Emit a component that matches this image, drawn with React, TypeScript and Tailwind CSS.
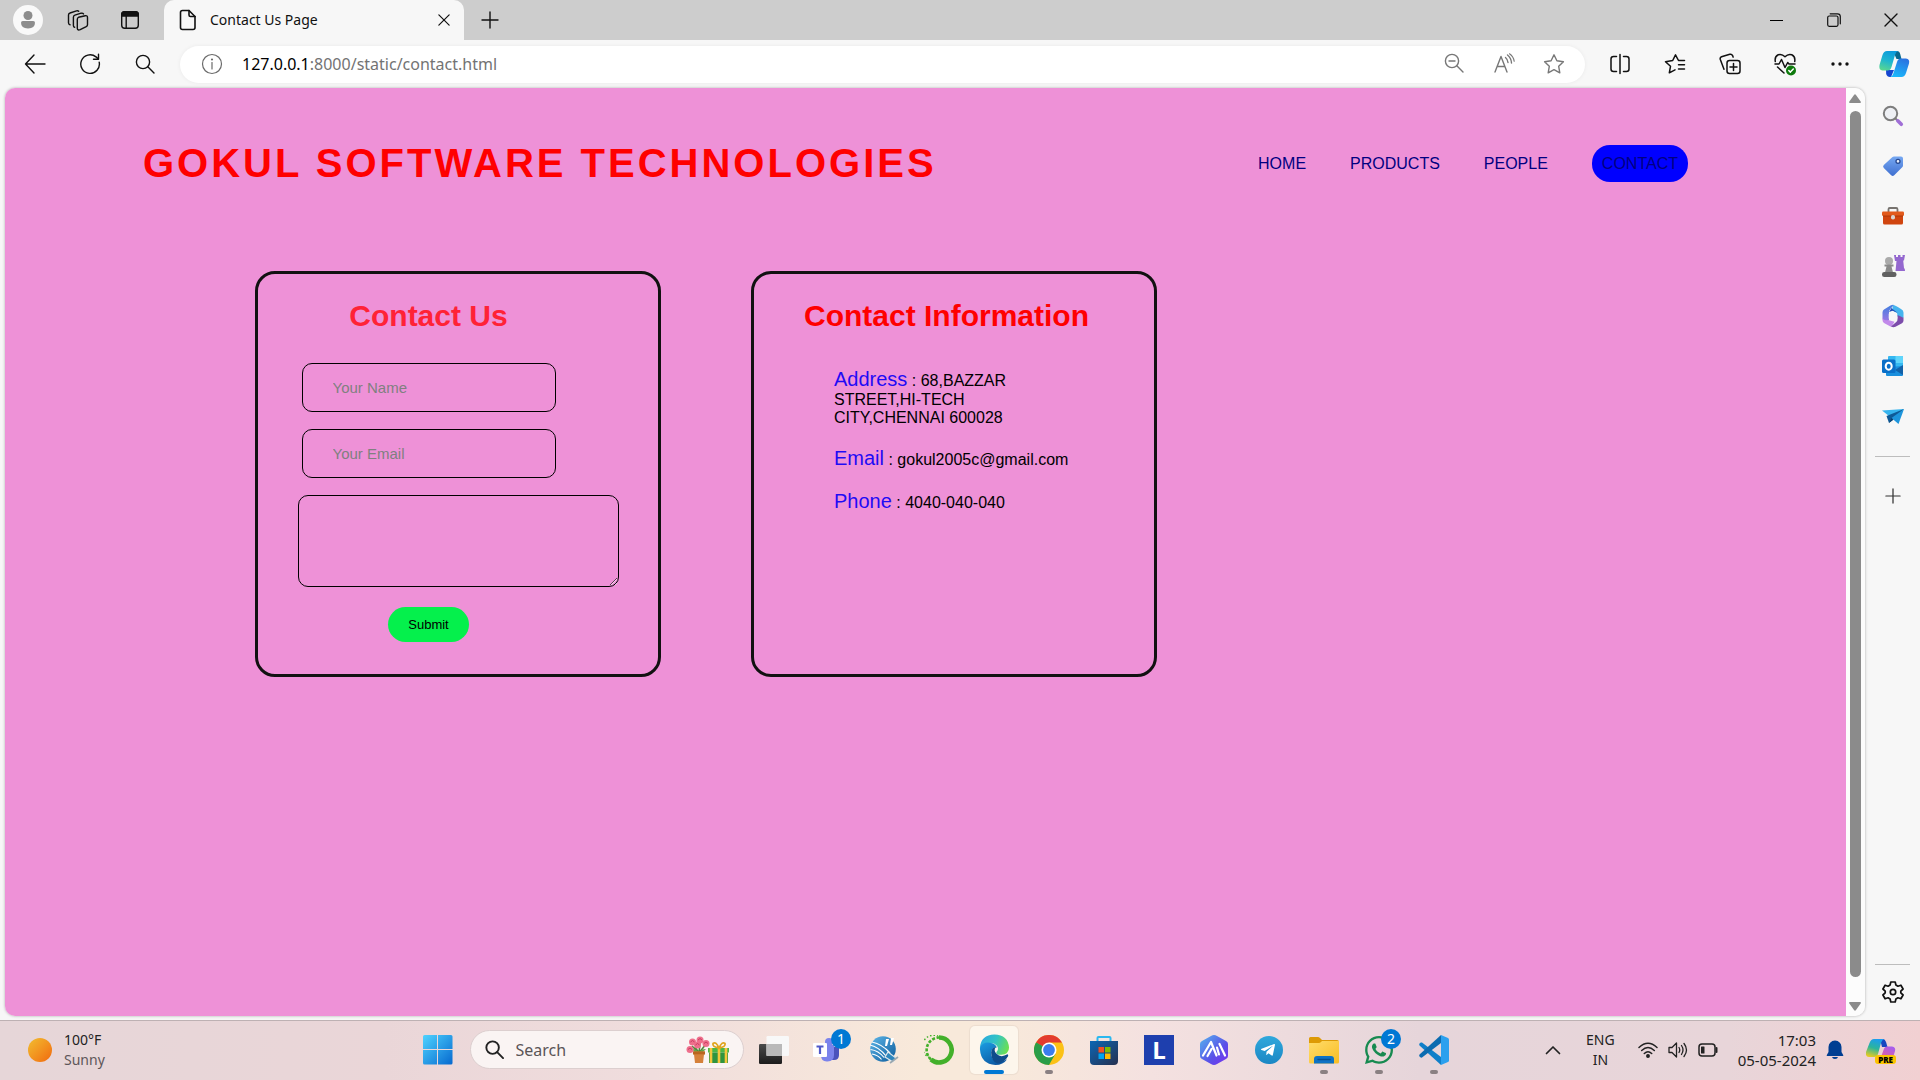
import React from "react";
import { FaWhatsapp, FaTelegramPlane } from "react-icons/fa";

type IconProps = { className?: string };

const line = {
  fill: "none",
  stroke: "currentColor",
  strokeWidth: 1.4,
  strokeLinecap: "round" as const,
  strokeLinejoin: "round" as const,
};

/* ---------- Browser chrome icons ---------- */

const ProfileIcon = () => (
  <svg className="size-[30px]" viewBox="0 0 30 30">
    <circle cx="15" cy="15" r="15" fill="#f9f9f9" />
    <circle cx="15" cy="10.500" r="4.500" fill="#8d8d8d" />
    <path d="M8 17.800q0-1.800 1.800-1.800h10.400q1.800 0 1.800 1.800 0 5.700-7 5.700t-7-5.700z" fill="#8d8d8d" />
  </svg>
);

const WorkspacesIcon = () => (
  <svg className="size-[22px]" viewBox="0 0 22 22" {...line}>
    <path d="M11.500 8.300l6.800-1.600q2.200-.4 2.200 1.800v7.200q0 1.300-1.300 2l-6 2.900q-2.700 1.100-2.900-1.200v-9q0-1.700 1.200-2.100z" />
    <path d="M7.600 18.300q-1.200-.2-1.200-1.800V8.200q0-1.500 1.500-2l6.200-2q1.700-.4 2.400.7" />
    <path d="M3 15.800q-1.500-.3-1.500-2V6q0-1.600 1.500-2l6.500-2.200q1.400-.4 2.200.5" />
  </svg>
);

const TabActionsIcon = () => (
  <svg className="size-5" viewBox="0 0 20 20" {...line}>
    <rect x="1.700" y="1.700" width="16.600" height="16.600" rx="3" />
    <path d="M1.700 4.500q0-2.800 2.800-2.800h11q2.800 0 2.800 2.800V6H1.700z" fill="currentColor" />
    <path d="M6.200 6v12" />
  </svg>
);

const PageIcon = () => (
  <svg className="h-[22px] w-[18px]" viewBox="0 0 18 22" {...line} strokeWidth={1.600}>
    <path d="M3.500 1.500H10l6 6v11q0 2-2 2H3.500q-2 0-2-2v-15q0-2 2-2z" />
    <path d="M10 1.500V6q0 1.500 1.500 1.500H16" />
  </svg>
);

const CrossIcon = ({ className }: IconProps) => (
  <svg className={className} viewBox="0 0 14 14" {...line}>
    <path d="M1 1l12 12M13 1L1 13" />
  </svg>
);

const PlusIcon = ({ className }: IconProps) => (
  <svg className={className} viewBox="0 0 18 18" {...line}>
    <path d="M9 1v16M1 9h16" />
  </svg>
);

const RestoreIcon = () => (
  <svg className="size-[14px]" viewBox="0 0 14 14" {...line} strokeWidth={1.200}>
    <rect x=".7" y="3" width="10.300" height="10.300" rx="1.500" />
    <path d="M3.200 .8h7.300q2.800 0 2.800 2.800V10.800" />
  </svg>
);

const BackIcon = () => (
  <svg className="size-[22px]" viewBox="0 0 22 22" {...line}>
    <path d="M10 2L1.500 11 10 20M1.500 11H21" />
  </svg>
);

const ReloadIcon = () => (
  <svg className="size-[22px]" viewBox="0 0 22 22" {...line}>
    <path d="M20.200 9.200A9.300 9.300 0 1 1 17 3.900l2.300 2" />
    <path d="M19.500 1.200v5h-5" />
  </svg>
);

const SearchIcon = ({ className }: IconProps) => (
  <svg className={className} viewBox="0 0 20 20" {...line}>
    <circle cx="8" cy="8" r="6.600" />
    <path d="M12.800 12.800L19 19" />
  </svg>
);

const InfoIcon = () => (
  <svg className="size-[22px] text-[#6a6a6a]" viewBox="0 0 22 22" {...line} strokeWidth={1.200}>
    <circle cx="11" cy="11" r="9.500" />
    <path d="M11 9.500V16" />
    <circle cx="11" cy="6.500" r=".5" fill="currentColor" />
  </svg>
);

const ZoomOutIcon = () => (
  <svg className="size-5" viewBox="0 0 20 20" {...line}>
    <circle cx="8" cy="8" r="6.600" />
    <path d="M12.800 12.800L19 19M5 8h6" />
  </svg>
);

const ReadAloudIcon = () => (
  <svg className="size-[22px]" viewBox="0 0 22 22" {...line}>
    <path d="M2 19L8 3.500 14 19M4.200 13.500h7.600" />
    <path d="M12.500 4.500q2.200 1.800 2.500 5M14.500 2q3.700 2.800 4 8" />
    <path d="M16.500 .8q4 2.700 4.700 7.500" strokeWidth={1.100} />
  </svg>
);

const STAR = "M11 1.800l2.900 6 6.500.9-4.700 4.600 1.100 6.500L11 16.700l-5.800 3.100 1.100-6.500L1.600 8.700l6.500-.9z";

const StarIcon = () => (
  <svg className="size-[22px]" viewBox="0 0 22 22" {...line}>
    <path d={STAR} />
  </svg>
);

const SplitIcon = () => (
  <svg className="size-[22px]" viewBox="0 0 22 22" {...line} strokeWidth={1.500}>
    <path d="M7.500 3.500h-3q-2.500 0-2.500 2.500v10q0 2.500 2.500 2.500h3M14.500 3.500h3q2.500 0 2.500 2.500v10q0 2.500-2.500 2.500h-3M11 1.500v19" />
  </svg>
);

const FavoritesIcon = () => (
  <svg className="size-[22px]" viewBox="0 0 22 22" {...line} strokeWidth={1.500}>
    <path d="M20.500 7.500h-6L11.500 1.800 8.700 7.500 1.500 8.700l5 4.600-1.200 6.500 5.700-3" />
    <path d="M14.500 11.700h6M14.500 16h6" />
  </svg>
);

const CollectionsIcon = () => (
  <svg className="size-[22px]" viewBox="0 0 22 22" {...line} strokeWidth={1.500}>
    <rect x="8" y="7.500" width="13" height="13" rx="2.500" />
    <path d="M14.500 10.500v7M11 14h7" />
    <path d="M5 16.200L1.300 6.500q-.6-2 1.200-2.700L10.800 1.300q1.900-.5 2.800 1.300l.5 1.500" />
  </svg>
);

const HeartPulseIcon = () => (
  <svg className="size-6" viewBox="0 0 24 24" {...line} strokeWidth={1.500}>
    <path d="M2.300 9.500q-.9-5 2.900-6.700 3.700-1.200 6.800 2 3.100-3.200 6.800-2 3.800 1.700 2.900 6.700" />
    <path d="M2 12h4l2.500-4.500 3.500 8 2.700-5L16 12h6M4.500 15l6.500 6" />
    <circle cx="18" cy="18.500" r="5" fill="#0e7a0d" stroke="none" />
    <path d="M15.800 18.500l1.600 1.600 2.900-3" stroke="#fff" />
  </svg>
);

const MoreIcon = () => (
  <svg className="h-1 w-[18px]" viewBox="0 0 18 4" fill="currentColor">
    <circle cx="2" cy="2" r="1.700" />
    <circle cx="9" cy="2" r="1.700" />
    <circle cx="16" cy="2" r="1.700" />
  </svg>
);

const CopilotIcon = () => (
  <svg className="h-7 w-8" viewBox="0 0 32 28">
    <defs>
      <linearGradient id="cpA" x1=".6" y1="0" x2=".3" y2="1">
        <stop offset="0" stopColor="#0c9bdc" />
        <stop offset=".5" stopColor="#1fb6cf" />
        <stop offset="1" stopColor="#58d691" />
      </linearGradient>
      <linearGradient id="cpB" x1=".7" y1="0" x2=".3" y2="1">
        <stop offset="0" stopColor="#2a72e0" />
        <stop offset="1" stopColor="#1ab8fb" />
      </linearGradient>
    </defs>
    <path d="M15 1h4q2.500 0 3.200 3l1.300 5h-5z" fill="#08698e" />
    <path d="M8 20h8l-3 7h-1q-3 0-3.800-3z" fill="#1546d0" />
    <path d="M9 1h11q-2 .5-3 4l-3.500 12q-1 3.500-4 3.500H4.500q-4-.5-3-5.500L4.500 5Q5.800 1 9 1z" fill="url(#cpA)" />
    <path d="M22.500 8.500H28q4 .5 3 5l-3 9.500q-1.300 4-4.500 4H12q2.500-.5 3.500-4L19 12q1-3.500 3.500-3.500z" fill="url(#cpB)" />
  </svg>
);

/* ---------- Sidebar icons ---------- */

const SideSearch = () => (
  <svg className="size-[22px]" viewBox="0 0 22 22" fill="none" strokeLinecap="round">
    <circle cx="8.500" cy="8.500" r="6.700" stroke="#7d7d7d" strokeWidth="2" fill="#eef0f4" />
    <path d="M13.500 13.500l2 2" stroke="#7d7d7d" strokeWidth="2" />
    <path d="M15.800 15.800l3.500 3.500" stroke="#a06fd6" strokeWidth="3.600" />
  </svg>
);

const SideTag = () => (
  <svg className="size-[22px]" viewBox="0 0 22 22">
    <defs>
      <linearGradient id="tag" x1="0" y1="0" x2="0" y2="1">
        <stop offset="0" stopColor="#76a8f2" />
        <stop offset="1" stopColor="#3f6fd0" />
      </linearGradient>
    </defs>
    <path d="M12 1.500h7q2 0 2 2v7q0 1-.8 1.800l-8 8q-1.500 1.400-3 0L1.800 13q-1.400-1.500 0-3l8.400-7.800q.8-.7 1.800-.7z" fill="url(#tag)" />
    <circle cx="16" cy="6.300" r="2" fill="#e8f0ff" stroke="#27488f" strokeWidth="1.300" />
  </svg>
);

const SideTools = () => (
  <svg className="size-[22px]" viewBox="0 0 22 22">
    <path d="M6.500 7V4.300q0-1.300 1.300-1.300h6.400q1.300 0 1.300 1.300V7" fill="none" stroke="#77736f" strokeWidth="1.800" />
    <rect x="1" y="9" width="20" height="10.500" rx="1.500" fill="#d0450f" />
    <rect x="0" y="6.500" width="22" height="4.500" rx="1.200" fill="#e25a1c" />
    <path d="M1 11h20" stroke="#a23208" strokeWidth=".8" />
    <rect x="9" y="10" width="4" height="4.500" rx="1.800" fill="#d9d4d0" />
  </svg>
);

const SideGames = () => (
  <svg className="size-6" viewBox="0 0 24 24">
    <path d="M13 1h2v2h2V1h2.500v2h2V1H24l-1 5.500h-.8l.8 7.500q1 .5 1 3h-9.500l1-10H14z" fill="#9468cf" />
    <circle cx="8" cy="7" r="4" fill="#aaa" />
    <path d="M3.500 10.500h9v2H10.500l1.500 6H4l1.500-6h-2z" fill="#8a8a8a" />
    <rect x="1" y="18" width="14.500" height="5" rx="2.300" fill="#616161" />
  </svg>
);

const SideM365 = () => (
  <svg className="size-6" viewBox="0 0 24 24">
    <defs>
      <linearGradient id="m365" x1="0" y1="0" x2="0" y2="1">
        <stop offset="0" stopColor="#3f7fe0" />
        <stop offset="1" stopColor="#a475e4" />
      </linearGradient>
    </defs>
    <path d="M12 1q2 0 8 4 2.500 1.300 2.500 3.500V14l-6.500-1.500V9l-5-2.500z" fill="#45b4ee" />
    <path d="M12.500 .8L8 7v9l-2 3-3-2q-1.500-1-1.500-3V8.500q0-2 1.500-3L9.500 1.600q1.500-.9 3-.8z" fill="url(#m365)" />
    <path d="M12.500 .8q-1.800 1.200-1.600 3.700l5.600 4.300-5-2L8 8z" fill="#2450b8" />
    <path d="M1.500 13.500q.5 2.500 3 2.700H8l5.500 1.500-3 5q-1-.2-2-.8L3 19q-1.500-1-1.500-3z" fill="#c28aea" />
    <path d="M16.500 11l6 2.700v2.800q0 1.800-1.500 2.700l-6.500 3.600q-2.300 1-4.500-.2l5.500-4.800q1-.8 1-2.500z" fill="#7c4cab" />
    <path d="M12 7.200l4.300 2.500v4.700L12 16.900l-4.300-2.500V9.700z" fill="#f7f7f7" />
  </svg>
);

const SideOutlook = () => (
  <svg className="size-[22px]" viewBox="0 0 22 22">
    <rect x="6" y="1" width="15" height="17" rx="1" fill="#35b8f1" />
    <path d="M13.500 1H20q1 0 1 1v6h-7.500z" fill="#5fd5fb" />
    <path d="M4 12l17-1v9q0 1-1 1H5q-1 0-1-1z" fill="#1a8fdd" />
    <path d="M13 15l8-5v10z" fill="#1261a8" />
    <rect x="0" y="4.500" width="13.500" height="13.500" rx="1.500" fill="#0a6fc8" />
    <ellipse cx="6.700" cy="11.200" rx="3" ry="3.500" fill="none" stroke="#fff" strokeWidth="2" />
  </svg>
);

const SideDrop = () => (
  <svg className="size-[22px]" viewBox="0 0 22 22">
    <path d="M0 5.500L22 4l-8.500 7.500-6.500-.5z" fill="#36b4ee" />
    <path d="M22 4L4.500 11 7 18z" fill="#0e5a97" />
    <path d="M22 4l-5.500 15L9.500 13z" fill="#1d95dc" />
    <path d="M7 18l2.500-5 2 1.800z" fill="#083f70" />
  </svg>
);

const GearIcon = () => (
  <svg className="size-6" viewBox="0 0 24 24" {...line} strokeWidth={1.700}>
    <path d="M9.800 2h4.400l.7 3 2 1.200 3-1 2.200 3.800-2.300 2.100v1.800l2.300 2.100-2.200 3.800-3-1-2 1.200-.7 3H9.800l-.7-3-2-1.200-3 1L1.900 15l2.300-2.100v-1.800L1.900 9l2.200-3.800 3 1 2-1.200z" />
    <circle cx="12" cy="12" r="2.700" />
  </svg>
);

/* ---------- Taskbar icons ---------- */

const WindowsIcon = () => (
  <svg className="size-[30px]" viewBox="0 0 30 30">
    <defs>
      <linearGradient id="win" x1="0" y1="0" x2="1" y2="1">
        <stop offset="0" stopColor="#4fd3ff" />
        <stop offset="1" stopColor="#0669cf" />
      </linearGradient>
    </defs>
    <path d="M1.500 0H14v14H0V1.500Q0 0 1.500 0zM15 0h13q1.500 0 1.500 1.500V14H15zM0 15h14v14.500H1.500Q0 29.500 0 28zM15 15h14.500v13q0 1.500-1.500 1.500H15z" fill="url(#win)" />
  </svg>
);

const FlowersIcon = () => (
  <svg className="h-[28px] w-[44px]" viewBox="0 0 44 28">
    <path d="M13 17L6 10M13 17l1-10M13 17l7-9M13 17l-4-6" stroke="#4b8b3b" strokeWidth="1.600" fill="none" />
    <path d="M6 13q5 0 7 4 2-4 7-4l-5 5h-5z" fill="#5fa548" />
    {[[4, 13.500], [6.500, 6], [14, 4], [20, 7.500], [11.500, 9]].map(([x, y]) => (
      <g key={`${x}-${y}`}>
        <circle cx={x} cy={y} r="3.500" fill="#ee6f8c" />
        <path d={`M${x - 2} ${y}q2-3 4 0`} stroke="#c93c60" fill="none" />
      </g>
    ))}
    <path d="M7 15.500h12v3h-1l-1 8.500H9l-1-8.500H7z" fill="#d5813a" />
    <path d="M7 15.500h12v2.800H7z" fill="#b9651f" />
    <rect x="22" y="12" width="21" height="4.500" fill="#4cb648" />
    <rect x="23" y="16.500" width="19" height="10.500" fill="#2f9440" />
    <path d="M25 12v15M33 12v15M40 12v15" stroke="#f5c63b" strokeWidth="2.600" />
    <path d="M33 12q-7-1-6-4.500 3-2.500 6 4.500 3-7 6-4.500 1 3.500-6 4.500z" fill="none" stroke="#e0a51f" strokeWidth="1.800" />
  </svg>
);

const TaskViewIcon = () => (
  <svg className="size-[30px]" viewBox="0 0 30 30">
    <defs>
      <linearGradient id="tv" x1="0" y1="0" x2="0" y2="1">
        <stop offset="0" stopColor="#4a4a4a" />
        <stop offset="1" stopColor="#1c1c1c" />
      </linearGradient>
    </defs>
    <rect x="0" y="9" width="23" height="20" rx="1.200" fill="url(#tv)" />
    <rect x="7.500" y="1" width="22.500" height="20" rx="1.200" fill="#f8f8f8" />
    <rect x="7.500" y="9" width="15.500" height="12" fill="#b9b9b9" />
  </svg>
);

const TeamsIcon = () => (
  <svg className="h-[30px] w-[34px]" viewBox="0 0 34 30">
    <path d="M16 12h11v8q0 5-5 5h-6z" fill="#4b53bc" />
    <path d="M9 10h13v10q0 6-6.500 6.500T9 20z" fill="#7b83eb" />
    <circle cx="17" cy="7" r="4" fill="#7b83eb" />
    <rect x="1" y="8" width="14" height="14" rx="1" fill="#fff" />
    <path d="M4.500 11.500h7M8 11.500V19" stroke="#5059c9" strokeWidth="2.200" />
  </svg>
);

const GlobeIcon = () => (
  <svg className="size-[30px]" viewBox="0 0 30 30">
    <defs>
      <linearGradient id="globe" x1="0" y1="0" x2="1" y2="1">
        <stop offset="0" stopColor="#5eb6e8" />
        <stop offset="1" stopColor="#0c5b9b" />
      </linearGradient>
    </defs>
    <circle cx="14" cy="14" r="12.800" fill="url(#globe)" />
    <path d="M1 10q9 2 16 11M1.500 14.500q8 1 13.500 8M3 19q6 1 9.500 5.500M3 7q10 2 18 11" stroke="#fff" strokeWidth="1.200" fill="none" />
    <path d="M17 4h3l-2 7h-2zM22 3h3l-2 7h-2z" fill="#fff" />
    <path d="M19 17l8 6-3 4-8-5z" fill="#2e86bd" stroke="#dfe7ec" strokeWidth="1.200" />
    <path d="M21 28l8-6" stroke="#9aa7af" strokeWidth="1.600" />
  </svg>
);

const AnacondaIcon = () => (
  <svg className="size-[30px]" viewBox="0 0 30 30" fill="none">
    <path d="M15 2.500a12.500 12.500 0 1 1-8 22" stroke="#43b02a" strokeWidth="4.600" />
    <path d="M7 24.500a12.500 12.500 0 0 1 8-22" stroke="#43b02a" strokeWidth="2.600" strokeDasharray="3 1.600" />
    <path d="M5.500 22.500A11.500 11.500 0 0 1 14 1" stroke="#43b02a" strokeWidth="1.500" strokeDasharray="1.500 2" />
  </svg>
);

const EdgeIcon = () => (
  <svg className="size-[31px]" viewBox="0 0 32 32">
    <defs>
      <linearGradient id="edA" x1="0" y1=".3" x2="1" y2=".6">
        <stop offset="0" stopColor="#2aa9e0" />
        <stop offset=".5" stopColor="#33c4c4" />
        <stop offset="1" stopColor="#6de050" />
      </linearGradient>
      <linearGradient id="edB" x1="0" y1="0" x2=".6" y2="1">
        <stop offset="0" stopColor="#1b9de2" />
        <stop offset="1" stopColor="#0c59a4" />
      </linearGradient>
    </defs>
    <path d="M1 14Q2 1 16 .5q14 .5 15 13.500 0 7-8 7.500-6 0-5-3 3-3 .5-6.500-3-3.500-8.500-2.500T1 14z" fill="url(#edA)" />
    <path d="M1 14q3-6 10-5 6 .5 7.500 5-5-1-6 5 0 8 7.500 9.500 4.500.5 9-2.500-4 6-12 6Q2 31 1 16z" fill="url(#edB)" />
    <path d="M12.500 19q.5-5 5-5.500-3 3 .5 7 4.500 4.500 11.500.5 1 .5.500 2Q26 30 19 30.500q-6-2-6.500-11.500z" fill="#0f4c8c" />
  </svg>
);

const ChromeIcon = () => (
  <svg className="size-[30px]" viewBox="0 0 30 30">
    <circle cx="15" cy="15" r="15" fill="#fbc116" />
    <path d="M15 15L2 7.500A15 15 0 0 1 28 7.500H15z" fill="#e33b2e" />
    <path d="M2 7.500A15 15 0 0 0 15 30l6.500-11.300L15 15z" fill="#2a9d48" />
    <path d="M2 7.500l6.500 11.300L15 15z" fill="#2a9d48" />
    <circle cx="15" cy="15" r="7.500" fill="#fff" />
    <circle cx="15" cy="15" r="5.900" fill="#3b7ded" />
  </svg>
);

const StoreIcon = () => (
  <svg className="size-[30px]" viewBox="0 0 30 30">
    <defs>
      <linearGradient id="store" x1="0" y1="0" x2="1" y2="1">
        <stop offset="0" stopColor="#0c66b4" />
        <stop offset="1" stopColor="#26304f" />
      </linearGradient>
    </defs>
    <path d="M8.500 7V3q0-1 1-1h11q1 0 1 1v4" fill="none" stroke="#2bb8ef" strokeWidth="2" />
    <path d="M1 6h28v20q0 4-4 4H5q-4 0-4-4z" fill="url(#store)" />
    <path d="M9.500 12H15v5.500H9.500z" fill="#f25022" />
    <path d="M16 12h5.500v5.500H16z" fill="#7fba00" />
    <path d="M9.500 18.500H15V24H9.500z" fill="#00a4ef" />
    <path d="M16 18.500h5.500V24H16z" fill="#ffb900" />
  </svg>
);

const LetterTile = () => (
  <span className="flex size-[30px] items-center justify-center bg-[#1e3fae] font-['Open_Sans',sans-serif] text-2xl font-bold text-white">
    L
  </span>
);

const HexIcon = () => (
  <svg className="size-[30px]" viewBox="0 0 30 30">
    <defs>
      <linearGradient id="hex" x1="0" y1="0" x2="1" y2="1">
        <stop offset="0" stopColor="#55b6ee" />
        <stop offset=".6" stopColor="#5a50e8" />
        <stop offset="1" stopColor="#7a2ff0" />
      </linearGradient>
    </defs>
    <path d="M15 0q1.500 0 3 1l9 5q2 1 2 3v12q0 2-2 3l-9 5q-3 2-6 0l-9-5q-2-1-2-3V9q0-2 2-3l9-5q1.500-1 3-1z" fill="url(#hex)" />
    <path d="M4 20.500L12 7l5.500 13.500M8.500 21l4-7M18 12.500l2 7M20.500 9l5.500 11.500" fill="none" stroke="#fff" strokeWidth="2.200" strokeLinecap="round" strokeLinejoin="round" />
  </svg>
);

const TelegramIcon = () => (
  <span className="flex size-7 items-center justify-center rounded-full bg-gradient-to-b from-[#2fa8dc] to-[#1b87c4]">
    <FaTelegramPlane className="mr-0.5 size-4 text-white" />
  </span>
);

const FolderIcon = () => (
  <svg className="size-[30px]" viewBox="0 0 30 30">
    <defs>
      <linearGradient id="fold" x1="0" y1="0" x2="1" y2="1">
        <stop offset="0" stopColor="#ffdc6b" />
        <stop offset="1" stopColor="#f9bd23" />
      </linearGradient>
    </defs>
    <path d="M0 3.500Q0 2 1.500 2H9q1 0 2 1l2 2h15q2 0 2 2v5H0z" fill="#dd9a06" />
    <path d="M0 8h10q1 0 2-1l1-1h17v21q0 1.500-1.500 1.500h-27Q0 28.500 0 27z" fill="url(#fold)" />
    <path d="M5 28.500V24q0-3 3-3h14q3 0 3 3v4.500z" fill="#0f72c4" />
    <path d="M9 24.500h12" stroke="#084f8f" strokeWidth="1.400" strokeLinecap="round" />
  </svg>
);

const WhatsAppIcon = () => <FaWhatsapp className="size-8 shrink-0 text-[#178a50]" />;

const CodeIcon = () => (
  <svg className="size-[30px]" viewBox="0 0 30 30">
    <path d="M3 7.500q-1.500-.5-2.500 1-.7 1.200.3 2.200L22 30v-8z" fill="#0f7fc9" />
    <path d="M3 22.500q-1.500.5-2.500-1-.7-1.200.3-2.200L22 0v8z" fill="#0b6bb0" />
    <path d="M22 0l7 3q1 .5 1 1.500v21q0 1-1 1.500l-7 3z" fill="#2ba0ee" />
  </svg>
);

const WifiIcon = () => (
  <svg className="h-4 w-5" viewBox="0 0 20 16" {...line} strokeWidth={1.500}>
    <path d="M1 5.500q9-8.500 18 0M3.700 8.500q6.300-6 12.600 0M6.300 11.500q3.700-3.500 7.400 0" />
    <circle cx="10" cy="14" r="1.200" fill="currentColor" />
  </svg>
);

const SpeakerIcon = () => (
  <svg className="h-[18px] w-5" viewBox="0 0 20 18" {...line} strokeWidth={1.300}>
    <path d="M1 6.500h3L8.500 2v14L4 11.500H1z" />
    <path d="M11 6.500q1.500 2.500 0 5M13.500 4.500q3 4.500 0 9M16 2.500q5 6.500 0 13" />
  </svg>
);

const BatteryIcon = () => (
  <svg className="h-[14px] w-5" viewBox="0 0 20 14" {...line} strokeWidth={1.500}>
    <rect x="1" y="1" width="16" height="12" rx="3" />
    <path d="M18.500 5v4" strokeWidth={2} />
    <rect x="3" y="3.500" width="3.500" height="7" rx=".5" fill="currentColor" stroke="none" />
  </svg>
);

const BellIcon = () => (
  <svg className="h-5 w-[18px]" viewBox="0 0 18 20" fill="#003e92">
    <path d="M9 .5q6 .5 6.500 6.500v5l1.800 3.200q.3.800-.6.800H1.300q-.9 0-.6-.8L2.500 12V7Q3 1 9 .5zM6 17h6q-.5 2-3 2t-3-2z" />
  </svg>
);

const CopilotPreIcon = () => (
  <svg className="h-[22px] w-[30px]" viewBox="0 0 30 22">
    <defs>
      <linearGradient id="preA" x1=".6" y1="0" x2=".3" y2="1">
        <stop offset="0" stopColor="#1b9cf0" />
        <stop offset=".5" stopColor="#2cb59b" />
        <stop offset="1" stopColor="#e8cb20" />
      </linearGradient>
      <linearGradient id="preB" x1=".8" y1="0" x2=".2" y2="1">
        <stop offset="0" stopColor="#a45cf0" />
        <stop offset="1" stopColor="#f5638a" />
      </linearGradient>
    </defs>
    <path d="M14 0h3q2 0 3 3l1.500 5H16z" fill="#1745c0" />
    <path d="M8 0h10q-2 1-3 4l-3 11q-1 3-4 3H3q-4-.5-3-5L3.500 4Q5 0 8 0z" fill="url(#preA)" />
    <path d="M21 7.500h5q4 .5 3 4.500l-3 10H12q2-1 3-4l2.500-7q1-3.500 3.500-3.500z" fill="url(#preB)" />
  </svg>
);

/* ---------- Sections ---------- */

const TabStrip = () => (
  <div className="flex h-10 shrink-0 items-center bg-[#cdcdcd] text-[#111]">
    <div className="flex w-[164px] items-center">
      <button aria-label="Profile" className="ml-[13px]"><ProfileIcon /></button>
      <button aria-label="Workspaces" className="ml-6"><WorkspacesIcon /></button>
      <button aria-label="Tab actions" className="ml-[31px]"><TabActionsIcon /></button>
    </div>
    <div className="flex h-10 w-[300px] items-center rounded-t-[10px] bg-[#f7f7f7] pr-2.5 pl-[15px]">
      <PageIcon />
      <span className="ml-[13px] flex-1 text-sm">Contact Us Page</span>
      <button aria-label="Close tab" className="p-1"><CrossIcon className="size-3" /></button>
    </div>
    <button aria-label="New tab" className="ml-[17px]"><PlusIcon className="size-[18px]" /></button>
    <div className="ml-auto flex">
      <button aria-label="Minimize" className="flex w-[57px] items-center justify-center">
        <span className="h-px w-[13px] bg-black" />
      </button>
      <button aria-label="Restore" className="flex w-[57px] items-center justify-center"><RestoreIcon /></button>
      <button aria-label="Close" className="flex w-[58px] items-center justify-center"><CrossIcon className="size-[14px]" /></button>
    </div>
  </div>
);

const ToolButton = ({ label, children }: { label: string; children: React.ReactNode }) => (
  <button aria-label={label} className="flex h-9 w-[55px] shrink-0 items-center justify-center">
    {children}
  </button>
);

const Toolbar = () => (
  <div className="flex h-12 shrink-0 items-center bg-[#f7f7f7] text-[#111]">
    <div className="flex pr-px pl-[7px]">
      <ToolButton label="Back"><BackIcon /></ToolButton>
      <ToolButton label="Refresh"><ReloadIcon /></ToolButton>
      <ToolButton label="Search"><SearchIcon className="size-5" /></ToolButton>
    </div>
    <div className="mx-[7px] flex h-[37px] flex-1 items-center rounded-full bg-white pr-1.5 pl-[21px] shadow-[0_0_4px_rgba(0,0,0,0.06)]">
      <InfoIcon />
      <span className="ml-[19px] flex-1 text-base text-[#737373]">
        <span className="text-black">127.0.0.1</span>:8000/static/contact.html
      </span>
      <div className="flex text-[#777]">
        <button aria-label="Zoom out" className="flex w-[50px] justify-center"><ZoomOutIcon /></button>
        <button aria-label="Read aloud" className="flex w-[50px] justify-center"><ReadAloudIcon /></button>
        <button aria-label="Add to favorites" className="flex w-[50px] justify-center"><StarIcon /></button>
      </div>
    </div>
    <ToolButton label="Split screen"><SplitIcon /></ToolButton>
    <ToolButton label="Favorites"><FavoritesIcon /></ToolButton>
    <ToolButton label="Collections"><CollectionsIcon /></ToolButton>
    <ToolButton label="Browser essentials"><HeartPulseIcon /></ToolButton>
    <ToolButton label="More"><MoreIcon /></ToolButton>
    <button aria-label="Copilot" className="flex w-[53px] justify-center"><CopilotIcon /></button>
  </div>
);

const NAV = [
  { label: "HOME", active: false },
  { label: "PRODUCTS", active: false },
  { label: "PEOPLE", active: false },
  { label: "CONTACT", active: true },
];

const SiteHeader = () => (
  <header className="flex h-[150px] items-center justify-between pr-[158px] pl-[138px]">
    <h1 className="text-[40px] font-bold tracking-[3px] whitespace-nowrap text-[#ff0000]">GOKUL SOFTWARE TECHNOLOGIES</h1>
    <nav className="flex gap-11">
      {NAV.map((item) => (
        <a
          key={item.label}
          href="#"
          className={
            item.active
              ? "rounded-[18px] bg-[#0000ff] px-2.5 text-base leading-[37px] text-[#000080]"
              : "text-base leading-[37px] text-[#000080]"
          }
        >
          {item.label}
        </a>
      ))}
    </nav>
  </header>
);

const ContactForm = () => (
  <section className="h-[406px] w-[406px] rounded-[20px] border-[3px] border-[#111] pt-6 pl-10">
    <form className="flex w-[261px] flex-col items-center" onSubmit={(e) => e.preventDefault()}>
      <h2 className="text-3xl leading-9 font-bold text-[#ff2236]">Contact Us</h2>
      <input
        type="text"
        aria-label="Your Name"
        placeholder="Your Name"
        className="mt-[29px] h-[49px] w-[254px] rounded-[10px] border border-black bg-transparent px-[30px] text-[15px] placeholder:text-[#808080]"
      />
      <input
        type="email"
        aria-label="Your Email"
        placeholder="Your Email"
        className="mt-[17px] h-[49px] w-[254px] rounded-[10px] border border-black bg-transparent px-[30px] text-[15px] placeholder:text-[#808080]"
      />
      <textarea
        aria-label="Message"
        className="mt-[17px] h-[92px] w-[321px] shrink-0 resize self-start rounded-[10px] border border-black bg-transparent p-2"
      />
      <button type="submit" className="mt-5 h-[35px] w-[81px] rounded-full bg-[#05f04c] text-[13px] text-black">
        Submit
      </button>
    </form>
  </section>
);

const DETAILS = [
  { label: "Address", value: "68,BAZZAR STREET,HI-TECH CITY,CHENNAI 600028" },
  { label: "Email", value: "gokul2005c@gmail.com" },
  { label: "Phone", value: "4040-040-040" },
];

const ContactInfo = () => (
  <section className="h-[406px] w-[406px] rounded-[20px] border-[3px] border-[#111] pt-6">
    <h2 className="pl-[50px] text-3xl leading-9 font-bold text-[#ff0000]">Contact Information</h2>
    <div className="mt-[34px] flex w-[318px] flex-col gap-5 pl-20">
      {DETAILS.map((d) => (
        <p key={d.label} className="text-base leading-[normal] text-black">
          <span className="text-xl leading-[normal] text-[#1f0bf5]">{d.label}</span> : {d.value}
        </p>
      ))}
    </div>
  </section>
);

const Scrollbar = () => (
  <div className="flex w-[19px] shrink-0 flex-col items-center bg-[#fcfcfc] pt-1.5 pr-px pb-[5px]">
    <svg className="h-[9px] w-3" viewBox="0 0 12 9" fill="#8b8b8b"><path d="M5 1q1-1.500 2 0l5 7q0 1-1 1H1Q0 9 0 8z" /></svg>
    <div className="mt-2 mb-[25px] w-[11px] flex-1 rounded-full bg-[#8b8b8b]" />
    <svg className="h-[9px] w-3" viewBox="0 0 12 9" fill="#8b8b8b"><path d="M5 8q1 1.500 2 0l5-7q0-1-1-1H1Q0 0 0 1z" /></svg>
  </div>
);

const SIDE = [
  { label: "Search", icon: <SideSearch /> },
  { label: "Shopping", icon: <SideTag /> },
  { label: "Tools", icon: <SideTools /> },
  { label: "Games", icon: <SideGames /> },
  { label: "Microsoft 365", icon: <SideM365 /> },
  { label: "Outlook", icon: <SideOutlook /> },
  { label: "Drop", icon: <SideDrop /> },
];

const Sidebar = () => (
  <aside className="flex w-[55px] shrink-0 flex-col items-center pt-[3px] text-[#111]">
    {SIDE.map((s) => (
      <button key={s.label} aria-label={s.label} className="flex h-[50px] items-center justify-center">
        {s.icon}
      </button>
    ))}
    <hr className="mt-[15px] w-[35px] border-[#bdbdbd]" />
    <button aria-label="Customize" className="mt-[31px] text-[#333]"><PlusIcon className="size-4" /></button>
    <hr className="mt-auto w-[35px] border-[#bdbdbd]" />
    <button aria-label="Settings" className="mt-[15px] mb-3"><GearIcon /></button>
  </aside>
);

type TaskItem = { name: string; icon: React.ReactNode; badge?: string; state?: "active" | "running" };

const APPS: TaskItem[] = [
  { name: "Task view", icon: <TaskViewIcon /> },
  { name: "Teams", icon: <TeamsIcon />, badge: "1" },
  { name: "Globe", icon: <GlobeIcon /> },
  { name: "Anaconda", icon: <AnacondaIcon /> },
  { name: "Edge", icon: <EdgeIcon />, state: "active" },
  { name: "Chrome", icon: <ChromeIcon />, state: "running" },
  { name: "Store", icon: <StoreIcon /> },
  { name: "L", icon: <LetterTile /> },
  { name: "Hex", icon: <HexIcon /> },
  { name: "Telegram", icon: <TelegramIcon /> },
  { name: "File Explorer", icon: <FolderIcon />, state: "running" },
  { name: "WhatsApp", icon: <WhatsAppIcon />, badge: "2", state: "running" },
  { name: "Code", icon: <CodeIcon />, state: "running" },
];

const TaskApp = ({ app }: { app: TaskItem }) => (
  <div className="flex w-[55px] justify-center">
    <button
      aria-label={app.name}
      className={
        app.state === "active"
          ? "relative flex size-12 items-center justify-center rounded-[5px] bg-[#fdf6ec] shadow-[0_0_1px_1px_rgba(0,0,0,0.05)]"
          : "relative flex size-12 items-center justify-center"
      }
    >
      {app.icon}
      {app.badge && (
        <span className="absolute top-[3px] right-0.5 flex size-5 items-center justify-center rounded-full bg-[#0078d4] text-sm text-white">
          {app.badge}
        </span>
      )}
      {app.state === "active" && <span className="absolute bottom-0 h-1 w-5 rounded-full bg-[#0078d4]" />}
      {app.state === "running" && <span className="absolute bottom-0 h-1 w-2 rounded-full bg-[#8a8082]" />}
    </button>
  </div>
);

const Taskbar = () => (
  <footer className="flex h-[60px] shrink-0 items-center border-t border-[#bdb1b3] bg-[linear-gradient(90deg,#e6d6d8_0%,#ead6d8_20%,#f0dddd_34%,#f8e9da_48%,#f8e9da_52%,#f4e1e0_60%,#e6d5da_74%,#e8d5d9_90%,#f1d0d2_100%)] pb-0.5 text-[#222]">
    <div className="flex flex-1 items-center pl-7">
      <span className="size-6 rounded-full bg-gradient-to-br from-[#f0bd30] to-[#f0680c]" />
      <div className="ml-3 text-sm leading-5">
        <div>100°F</div>
        <div className="text-[#5e5658]">Sunny</div>
      </div>
    </div>
    <div className="mr-10 flex items-center">
      <button aria-label="Start"><WindowsIcon /></button>
      <label className="ml-[17px] flex h-[39px] w-[274px] items-center rounded-full border border-[#dccfcf] bg-[#faf4f3] pr-[13px] pl-3.5">
        <SearchIcon className="size-[19px] stroke-2 text-[#222]" />
        <input
          type="text"
          aria-label="Search"
          placeholder="Search"
          className="ml-3 w-0 flex-1 bg-transparent text-base placeholder:text-[#5a5557]"
        />
        <FlowersIcon />
      </label>
      <div className="ml-[3px] flex">
        {APPS.map((a) => (
          <TaskApp key={a.name} app={a} />
        ))}
      </div>
    </div>
    <div className="flex flex-1 items-center justify-end pr-6">
      <button aria-label="Show hidden icons">
        <svg className="h-2.5 w-4" viewBox="0 0 16 10" {...line} strokeWidth={1.700}><path d="M1.500 8.500L8 2l6.500 6.500" /></svg>
      </button>
      <div className="ml-[25px] text-center text-sm leading-5">
        <div>ENG</div>
        <div>IN</div>
      </div>
      <div className="ml-[23px] flex items-center gap-2.5">
        <WifiIcon />
        <SpeakerIcon />
        <BatteryIcon />
      </div>
      <div className="ml-5 text-right text-[15px] leading-5">
        <div>17:03</div>
        <div>05-05-2024</div>
      </div>
      <button aria-label="Notifications" className="ml-2.5"><BellIcon /></button>
      <button aria-label="Copilot preview" className="relative ml-[22px] h-7 w-[30px]">
        <CopilotPreIcon />
        <span className="absolute right-0 bottom-0 rounded-[3px] bg-[#fbc400] px-[3px] text-[8px] leading-[9px] font-black text-black">PRE</span>
      </button>
    </div>
  </footer>
);

export default function App() {
  return (
    <div className="flex h-screen flex-col overflow-hidden bg-[#f7f7f7] font-['Noto_Sans',sans-serif]">
      <TabStrip />
      <Toolbar />
      <div className="flex min-h-0 flex-1 pb-1 pl-[5px]">
        <div className="flex min-w-0 flex-1 overflow-hidden rounded-[10px] shadow-[0_0_3px_rgba(0,0,0,0.3)]">
          <main className="min-w-0 flex-1 bg-[#ee91d7] font-['Liberation_Sans',Arial,sans-serif]">
            <SiteHeader />
            <div className="flex gap-[90px] pt-[33px] pl-[250px]">
              <ContactForm />
              <ContactInfo />
            </div>
          </main>
          <Scrollbar />
        </div>
        <Sidebar />
      </div>
      <Taskbar />
    </div>
  );
}
